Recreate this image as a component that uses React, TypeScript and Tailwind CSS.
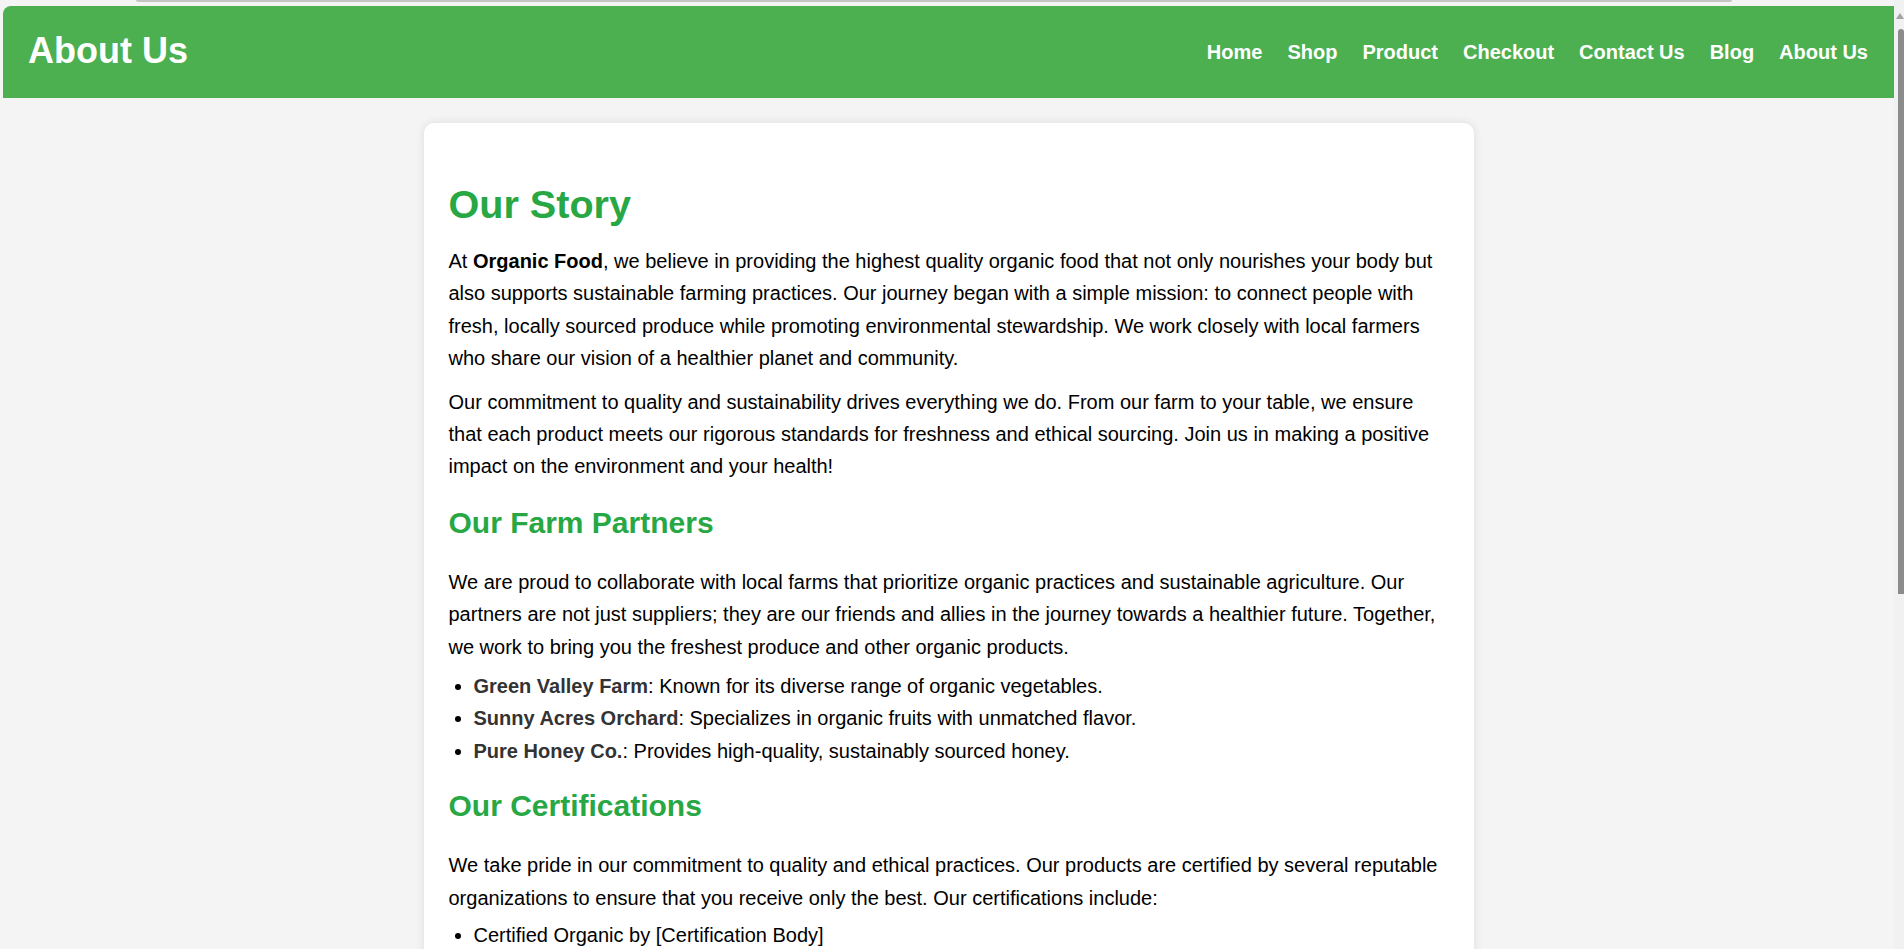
import React from "react";

const links = ["Home", "Shop", "Product", "Checkout", "Contact Us", "Blog", "About Us"];

const partners = [
  { name: "Green Valley Farm", text: "Known for its diverse range of organic vegetables." },
  { name: "Sunny Acres Orchard", text: "Specializes in organic fruits with unmatched flavor." },
  { name: "Pure Honey Co.", text: "Provides high-quality, sustainably sourced honey." },
];

const certifications = [
  "Certified Organic by [Certification Body]",
  "Non-GMO Project Verified",
  "Fair Trade Certified",
];

const Heading = ({ children, tight }: { children: React.ReactNode; tight?: boolean }) => (
  <h2
    className={`${tight ? "mt-[22px]" : "mt-[23px]"} mb-[26px] text-[30px] leading-[34px] font-bold text-[#28a745]`}
  >
    {children}
  </h2>
);

const Scrollbar = () => (
  <div className="flex w-[10px] flex-col items-end bg-[#f1f1f1]">
    <div className="h-[13px]" />
    <svg width="8" height="6" viewBox="0 0 8 6">
      <polygon points="4,0 8,6 0,6" fill="#a3a3a3" />
    </svg>
    <div className="mt-[10px] h-[565px] w-[6px] rounded-t-[3px] bg-[#8b8b8b]" />
  </div>
);

export default function App() {
  return (
    <div className="flex h-[949px] overflow-hidden bg-[#f4f4f4] font-['Liberation_Sans',Arial,sans-serif]">
      <div className="min-w-0 flex-1 pl-[3px]">
        <div className="h-[6px]">
          <div className="ml-[133px] h-[2px] w-[1596px] rounded-b-full bg-[#c4c4c4]" />
        </div>
        <header className="flex h-[92px] items-center justify-between rounded-tl-[8px] bg-[#4caf50] pr-[26px] pl-[25px]">
          <h1 className="pb-[3px] text-[36px] leading-[40px] font-bold text-white">About Us</h1>
          <nav className="flex gap-[25px]">
            {links.map((l) => (
              <a key={l} href="#" className="text-[20px] leading-[23px] font-bold text-white">
                {l}
              </a>
            ))}
          </nav>
        </header>

        <main className="mx-auto mt-[25px] w-[1050px] rounded-[10px] bg-white p-[25px] text-[20px] leading-[32.4px] text-black shadow-[0_0_10px_rgba(0,0,0,0.1)]">
          <h1 className="mt-[33px] mb-[18px] text-[39.6px] leading-[46px] font-bold text-[#28a745]">
            Our Story
          </h1>
          <p className="mb-[11px]">
            At <strong className="font-bold">Organic Food</strong>, we believe in providing the
            highest quality organic food that not only nourishes your body but also supports
            sustainable farming practices. Our journey began with a simple mission: to connect
            people with fresh, locally sourced produce while promoting environmental stewardship.
            We work closely with local farmers who share our vision of a healthier planet and
            community.
          </p>
          <p className="mb-[11px]">
            Our commitment to quality and sustainability drives everything we do. From our farm to
            your table, we ensure that each product meets our rigorous standards for freshness and
            ethical sourcing. Join us in making a positive impact on the environment and your
            health!
          </p>

          <Heading>Our Farm Partners</Heading>
          <p className="mb-[7px]">
            We are proud to collaborate with local farms that prioritize organic practices and
            sustainable agriculture. Our partners are not just suppliers; they are our friends and
            allies in the journey towards a healthier future. Together, we work to bring you the
            freshest produce and other organic products.
          </p>
          <ul className="list-disc pl-[25px]">
            {partners.map((p) => (
              <li key={p.name}>
                <strong className="font-bold text-[#333]">{p.name}</strong>: {p.text}
              </li>
            ))}
          </ul>

          <Heading tight>Our Certifications</Heading>
          <p className="mb-[5px]">
            We take pride in our commitment to quality and ethical practices. Our products are
            certified by several reputable organizations to ensure that you receive only the best.
            Our certifications include:
          </p>
          <ul className="list-disc pl-[25px]">
            {certifications.map((c) => (
              <li key={c}>{c}</li>
            ))}
          </ul>
        </main>
      </div>
      <Scrollbar />
    </div>
  );
}
